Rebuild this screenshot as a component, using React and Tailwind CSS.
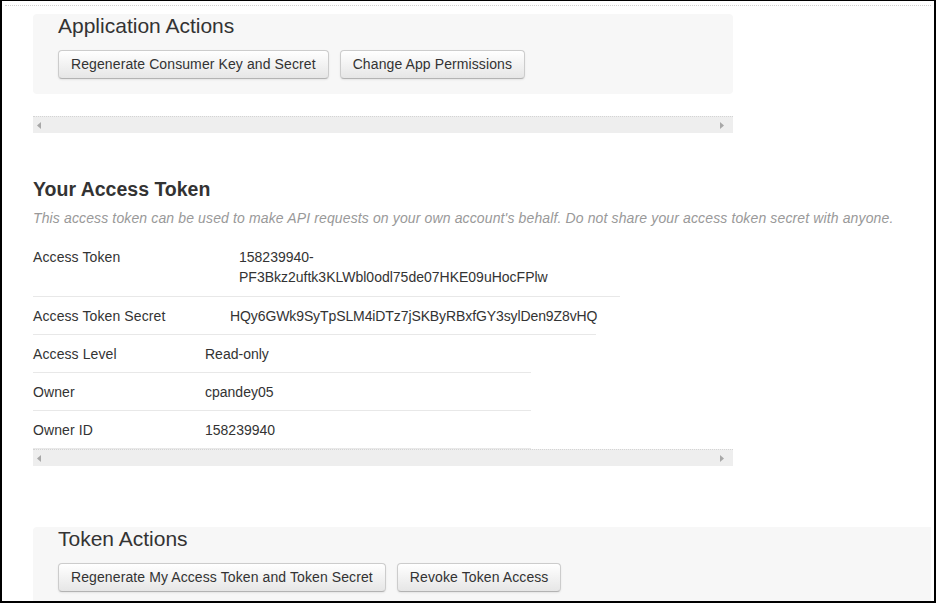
import React from "react";

const font = { fontFamily: '"Liberation Sans", Arial, sans-serif' };

function Btn({ children }) {
  return (
    <button className="h-[29px] rounded-[4px] border border-[#cccccc] border-b-[#b3b3b3] bg-linear-to-b from-white to-[#e6e6e6] px-[12px] text-[14px] leading-[19px] tracking-[0.1px] text-[#333333] shadow-[inset_0_1px_0_rgba(255,255,255,0.2),0_1px_2px_rgba(0,0,0,0.08)] whitespace-nowrap">
      {children}
    </button>
  );
}

function ScrollBar() {
  return (
    <div className="flex h-[17px] w-[700px] items-center justify-between border-t border-dotted border-[#d4d4d4] bg-[#eeeeee] px-[4px]">
      <svg width="4" height="7" viewBox="0 0 4 7">
        <path d="M4 0 L0 3.5 L4 7 Z" fill="#a8a8a8" />
      </svg>
      <svg width="4" height="7" viewBox="0 0 4 7" className="mr-[5px]">
        <path d="M0 0 L4 3.5 L0 7 Z" fill="#a8a8a8" />
      </svg>
    </div>
  );
}

function Row({ width, labelWidth, label, children, extra = "", valueExtra = "" }) {
  return (
    <div
      className={`flex border-b border-[#e8e8e8] pt-[9px] pb-[8px] text-[14px] leading-5 text-[#333333] ${extra}`}
      style={{ width }}
    >
      <div className="shrink-0 tracking-[0.1px]" style={{ width: labelWidth }}>
        {label}
      </div>
      <div className={`whitespace-nowrap ${valueExtra}`}>{children}</div>
    </div>
  );
}

export default function App() {
  return (
    <div
      className="h-[603px] w-[936px] overflow-hidden border-t border-l-2 border-r-2 border-b-2 border-black bg-white"
      style={font}
    >
      <div className="mx-[3px] mt-[4px] h-0 border-t border-dotted border-[#d0d0d0]" />
      <div className="pl-[31px]">
        {/* Application Actions */}
        <div className="mt-[8px] w-[700px] rounded-[4px] bg-[#f7f7f7] pl-[25px] pb-[15px]">
          <h2 className="text-[21px] leading-[24px] text-[#333333]">Application Actions</h2>
          <div className="mt-[12px] flex gap-[11px]">
            <Btn>Regenerate Consumer Key and Secret</Btn>
            <Btn>Change App Permissions</Btn>
          </div>
        </div>

        <div className="mt-[22px]">
          <ScrollBar />
        </div>

        {/* Your Access Token */}
        <h1 className="mt-[44px] text-[19.5px] font-bold leading-[24px] text-[#333333]">Your Access Token</h1>
        <p className="mt-[7px] text-[14px] italic leading-5 tracking-[0.13px] text-[#999999]">
          This access token can be used to make API requests on your own account's behalf. Do not share your access token secret with anyone.
        </p>

        <div className="mt-[10px]">
          <Row width={587} labelWidth={206} label="Access Token" extra="pb-[9px]">
            158239940-
            <br />
            PF3Bkz2uftk3KLWbl0odl75de07HKE09uHocFPlw
          </Row>
          <Row width={563} labelWidth={197} label="Access Token Secret" valueExtra="tracking-[-0.1px]">
            HQy6GWk9SyTpSLM4iDTz7jSKByRBxfGY3sylDen9Z8vHQ
          </Row>
          <Row width={498} labelWidth={172} label="Access Level">
            Read-only
          </Row>
          <Row width={498} labelWidth={172} label="Owner">
            cpandey05
          </Row>
          <Row width={498} labelWidth={172} label="Owner ID">
            158239940
          </Row>
        </div>
        <ScrollBar />

        {/* Token Actions */}
        <div className="mt-[61px] h-[120px] w-[898px] rounded-tl-[4px] bg-[#f7f7f7] pl-[25px]">
          <h2 className="text-[21px] leading-[24px] text-[#333333]">Token Actions</h2>
          <div className="mt-[12px] flex gap-[11px]">
            <Btn>Regenerate My Access Token and Token Secret</Btn>
            <Btn>Revoke Token Access</Btn>
          </div>
        </div>
      </div>
    </div>
  );
}
